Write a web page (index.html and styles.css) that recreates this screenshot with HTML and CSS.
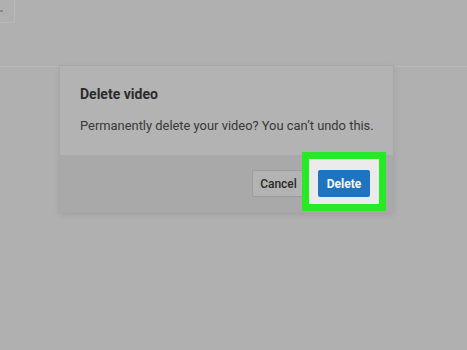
FILE: index.html
```html
<!DOCTYPE html>
<html lang="en">
<head>
  <meta charset="UTF-8" />
  <meta name="viewport" content="width=device-width, initial-scale=1.0" />
  <title>Delete video</title>
  <link rel="stylesheet" href="styles.css">
</head>
<body>
  <div class="topbar">
    <div class="back-btn"><span class="back-mark"></span></div>
  </div>

  <div class="dialog">
    <div class="dialog-body">
      <h2 class="dialog-title">Delete video</h2>
      <p class="dialog-text">Permanently delete your video? You can’t undo this.</p>
    </div>
    <div class="dialog-footer">
      <button class="btn btn-cancel">Cancel</button>
      <div class="highlight">
        <button class="btn btn-delete">Delete</button>
      </div>
    </div>
  </div>
</body>
</html>
```

FILE: styles.css
```css
body {
  margin: 0;
  background-color: #b0b0b0;
  font-family: Roboto, 'Liberation Sans', sans-serif;
  height: 350px;
  overflow: hidden;
}
.topbar {
  height: 67px;
  border-bottom: 1px solid #b8b8b8;
  box-sizing: border-box;
}
.back-btn {
  width: 14px;
  height: 22px;
  border-right: 1px solid #b9b9b9;
  border-bottom: 1px solid #b9b9b9;
  display: flex;
  align-items: center;
}
.back-mark {
  width: 3px;
  height: 2px;
  background: #8a8a8a;
}
.dialog {
  position: absolute;
  left: 60px;
  top: 66px;
  width: 333px;
  height: 146px;
  background-color: #b3b3b3;
  box-shadow: 0 0 0 1px #a7a7a7, 0 2px 6px rgba(0, 0, 0, 0.12);
  display: flex;
  flex-direction: column;
}
.dialog-body {
  height: 89px;
  padding: 19px 20px 0;
  box-sizing: border-box;
}
.dialog-title {
  margin: 0;
  font-size: 14px;
  font-weight: 700;
  line-height: 18px;
  color: #2b2b2b;
}
.dialog-text {
  margin: 14px 0 0;
  font-size: 12.9px;
  line-height: 18px;
  white-space: nowrap;
  color: #383838;
}
.dialog-footer {
  flex: 1;
  background-color: #a9a9a9;
  display: flex;
  justify-content: flex-end;
  align-items: flex-start;
  padding-right: 7px;
}
.btn {
  height: 27px;
  border-radius: 2px;
  font-family: inherit;
  font-size: 12px;
  font-weight: 500;
  padding: 0;
  cursor: pointer;
}
.btn-cancel {
  width: 53px;
  margin-top: 15px;
  margin-right: -3px;
  background-color: #b3b3b3;
  border: 1px solid #9d9d9d;
  color: #2a2a2a;
}
.highlight {
  margin-top: -3px;
  border: 7px solid #27ea27;
  background-color: #ebebeb;
  padding: 11px 9px 7px;
}
.btn-delete {
  display: block;
  width: 52px;
  background-color: #1f74c0;
  border: none;
  color: #f4f8fc;
  font-weight: 700;
}
```
